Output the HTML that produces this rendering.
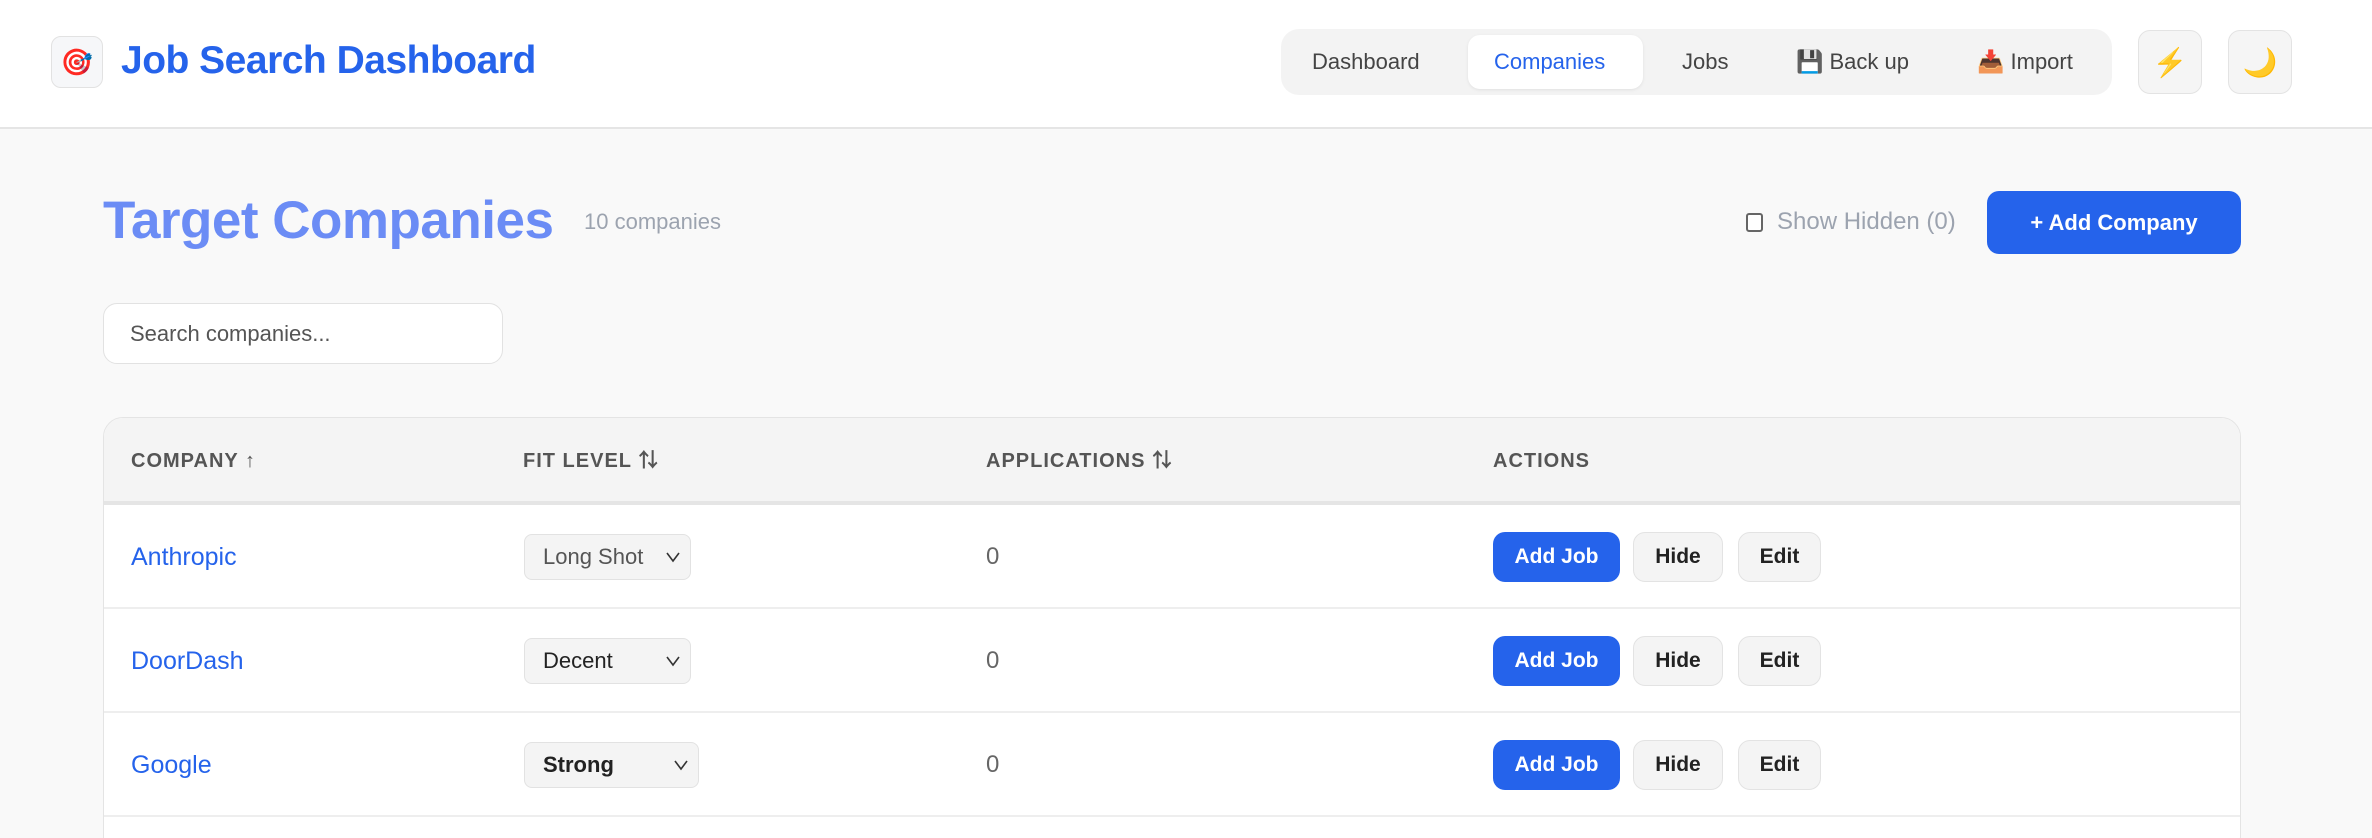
<!DOCTYPE html>
<html><head><meta charset="utf-8"><style>
*{box-sizing:border-box;margin:0;padding:0}
html,body{width:2372px;height:838px;overflow:hidden}
body{background:#f9f9f9;font-family:"Liberation Sans","Noto Sans CJK JP",sans-serif;position:relative}
.hdr{position:absolute;left:0;top:0;width:2372px;height:129px;background:#fff;border-bottom:2px solid #e5e5e5}
.abs{position:absolute}
.logo{left:51px;top:36px;width:52px;height:52px;border:1px solid #e2e2e2;border-radius:10px;background:#f6f7f9;display:flex;align-items:center;justify-content:center;font-size:26px}
.title{left:121px;top:37px;font-size:39px;font-weight:bold;color:#2563eb;letter-spacing:-0.5px;line-height:48px}
.nav{left:1281px;top:29px;width:831px;height:66px;background:#f3f3f3;border-radius:18px}
.act{left:1468px;top:35px;width:175px;height:54px;background:#fff;border-radius:12px;box-shadow:0 1px 3px rgba(0,0,0,.08)}
.ib{width:64px;height:64px;border:1px solid #e3e3e3;border-radius:12px;background:#f5f5f5;display:flex;align-items:center;justify-content:center;font-size:28px;top:30px}
.h1{left:103px;top:189px;font-size:53px;font-weight:bold;color:#6b8cf5;line-height:64px;letter-spacing:-0.5px}
.cnt{left:584px;top:208px;font-size:22px;color:#9ca3af;line-height:28px}
.add{left:1987px;top:191px;width:254px;height:63px;background:#2563eb;border-radius:12px;color:#fff;font-weight:bold;font-size:22px;display:flex;align-items:center;justify-content:center}
.srch{left:103px;top:303px;width:400px;height:61px;background:#fff;border:1px solid #e2e2e2;border-radius:14px;padding-left:26px;line-height:59px;font-size:22px;color:#555}
.tbl{left:103px;top:417px;width:2138px;height:440px;background:#fff;border:1px solid #e4e4e4;border-radius:20px;overflow:hidden}
.th{position:absolute;left:0;top:0;width:100%;height:87px;background:#f4f4f4;border-bottom:4px solid #e5e5e5}
.th span{position:absolute;top:0;line-height:86px;font-size:20px;font-weight:bold;color:#555;letter-spacing:1px}
.row{position:absolute;left:0;width:100%;height:104px;border-bottom:2px solid #eeeeee}
.row .c{position:absolute;left:27px;top:0;line-height:104px;font-size:25px;color:#2563eb}
.row .z{position:absolute;left:882px;top:0;line-height:104px;font-size:24px;color:#666}
.sel{position:absolute;left:420px;top:29px;height:46px;border:1px solid #e2e2e2;border-radius:8px;background:#f4f4f4;font-size:22px;line-height:44px;padding-left:18px;color:#222}
.sel svg{position:absolute;right:10px;top:16px}
.b{position:absolute;top:27px;height:50px;border-radius:12px;font-size:21px;font-weight:bold;display:flex;align-items:center;justify-content:center}
.b1{left:1389px;width:127px;background:#2563eb;color:#fff}
.b2{left:1529px;width:90px;background:#f4f4f4;border:1px solid #e3e3e3;color:#222}
.b3{left:1634px;width:83px;background:#f4f4f4;border:1px solid #e3e3e3;color:#222}
.n{position:absolute;line-height:66px;font-size:22px;color:#444;white-space:nowrap;top:29px}
</style></head><body>
<div class="hdr"></div>
<div class="abs logo">🎯</div>
<div class="abs title">Job Search Dashboard</div>
<div class="abs nav"></div>
<div class="abs act"></div>
<span class="n" style="left:1312px">Dashboard</span>
<span class="n" style="left:1494px;color:#2563eb">Companies</span>
<span class="n" style="left:1682px">Jobs</span>
<span class="n" style="left:1796px">💾 Back up</span>
<span class="n" style="left:1977px">📥 Import</span>
<div class="abs ib" style="left:2138px">⚡</div>
<div class="abs ib" style="left:2228px">🌙</div>
<div class="abs h1">Target Companies</div>
<div class="abs cnt">10 companies</div>
<div class="abs" style="left:1746px;top:213px;width:17px;height:19px;border:2px solid #666;border-radius:3px;background:#fff"></div>
<div class="abs" style="left:1777px;top:206px;font-size:24px;color:#9ca3af;line-height:32px">Show Hidden (0)</div>
<div class="abs add">+ Add Company</div>
<div class="abs srch">Search companies...</div>
<div class="abs tbl">
<div class="th"><span style="left:27px">COMPANY ↑</span><span style="left:419px">FIT LEVEL ⇅</span><span style="left:882px">APPLICATIONS ⇅</span><span style="left:1389px">ACTIONS</span></div>
<div class="row" style="top:87px"><span class="c">Anthropic</span><div class="sel" style="width:167px;color:#555">Long Shot<svg width="14" height="12" viewBox="0 0 14 12"><path d="M1 2 L7 10 L13 2" fill="none" stroke="#333" stroke-width="1.6"/></svg></div><span class="z">0</span><div class="b b1">Add Job</div><div class="b b2">Hide</div><div class="b b3">Edit</div></div>
<div class="row" style="top:191px"><span class="c">DoorDash</span><div class="sel" style="width:167px">Decent<svg width="14" height="12" viewBox="0 0 14 12"><path d="M1 2 L7 10 L13 2" fill="none" stroke="#333" stroke-width="1.6"/></svg></div><span class="z">0</span><div class="b b1">Add Job</div><div class="b b2">Hide</div><div class="b b3">Edit</div></div>
<div class="row" style="top:295px"><span class="c">Google</span><div class="sel" style="width:175px;font-weight:bold">Strong<svg width="14" height="12" viewBox="0 0 14 12"><path d="M1 2 L7 10 L13 2" fill="none" stroke="#333" stroke-width="1.6"/></svg></div><span class="z">0</span><div class="b b1">Add Job</div><div class="b b2">Hide</div><div class="b b3">Edit</div></div>
</div>
</body></html>
